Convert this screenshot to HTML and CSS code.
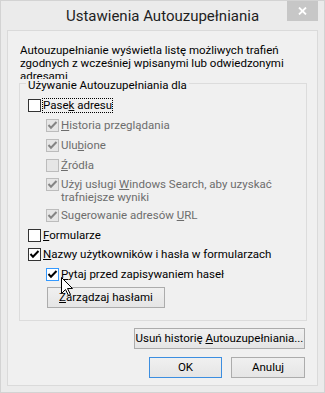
FILE: index.html
```html
<!DOCTYPE html>
<html lang="pl">
<head>
    <meta charset="UTF-8">
    <meta name="viewport" content="width=device-width, initial-scale=1.0">
    <title>Ustawienia Autouzupełniania</title>
    <link rel="stylesheet" href="styles.css">
</head>
<body>
    <div class="window">
        <div class="titlebar">
            <div class="title">Ustawienia Autouzupełniania</div>
            <div class="close">
                <svg width="9" height="8" viewBox="0 0 9 8"><path d="M1 0.5 L8 7.5 M8 0.5 L1 7.5" stroke="#fff" stroke-width="1.8" fill="none"/></svg>
            </div>
        </div>

        <div class="client">
            <p class="intro">Autouzupełnianie wyświetla listę możliwych trafień<br>zgodnych z wcześniej wpisanymi lub odwiedzonymi<br>adresami</p>

            <div class="group">
                <div class="group-label">Używanie Autouzupełniania dla</div>

                <div class="opt">
                    <span class="box"></span>
                    <span class="focus">Pase<u>k</u> adresu</span>
                </div>
                <div class="opt sub disabled">
                    <span class="box"><svg width="11" height="11" viewBox="0 0 11 11"><polyline points="1.5,5 4,7.8 9.5,2" /></svg></span>
                    <span><u>H</u>istoria przeglądania</span>
                </div>
                <div class="opt sub disabled">
                    <span class="box"><svg width="11" height="11" viewBox="0 0 11 11"><polyline points="1.5,5 4,7.8 9.5,2" /></svg></span>
                    <span>Ulu<u>b</u>ione</span>
                </div>
                <div class="opt sub disabled">
                    <span class="box"></span>
                    <span><u>Ź</u>ródła</span>
                </div>
                <div class="opt sub disabled search">
                    <span class="box"><svg width="11" height="11" viewBox="0 0 11 11"><polyline points="1.5,5 4,7.8 9.5,2" /></svg></span>
                    <span>Użyj usługi <u>W</u>indows Search, aby uzyskać<br>trafniejsze wyniki</span>
                </div>
                <div class="opt sub disabled after-search">
                    <span class="box"><svg width="11" height="11" viewBox="0 0 11 11"><polyline points="1.5,5 4,7.8 9.5,2" /></svg></span>
                    <span>Sugerowanie adresów <u>U</u>RL</span>
                </div>
                <div class="opt">
                    <span class="box"></span>
                    <span><u>F</u>ormularze</span>
                </div>
                <div class="opt tight">
                    <span class="box"><svg width="11" height="11" viewBox="0 0 11 11"><polyline points="1.5,5 4,7.8 9.5,2" /></svg></span>
                    <span><u>N</u>azwy użytkowników i hasła w formularzach</span>
                </div>
                <div class="opt sub hover">
                    <span class="box"><svg width="11" height="11" viewBox="0 0 11 11"><polyline points="1.5,5 4,7.8 9.5,2" /></svg></span>
                    <span><u>P</u>ytaj przed zapisywaniem haseł</span>
                </div>

                <button class="btn manage"><u>Z</u>arządzaj hasłami</button>
            </div>

            <div class="actions">
                <button class="btn wide">Usuń historię <u>A</u>utouzupełniania...</button>
                <div class="pair">
                    <button class="btn ok">OK</button>
                    <button class="btn cancel">Anuluj</button>
                </div>
            </div>
        </div>

        <svg class="cursor" width="12" height="19" viewBox="0 0 12 19">
            <polygon points="0.5,0.5 0.5,16.5 4.5,12.5 7.5,18.5 9.5,17.5 6.5,11.5 11.5,11.5" fill="#fff" stroke="#000" stroke-width="1"/>
        </svg>
    </div>
</body>
</html>
```

FILE: styles.css
```css
body {
    margin: 0;
    background: #ebebeb;
    font-family: Roboto, "Liberation Sans", sans-serif;
    font-size: 11.5px;
    color: #000;
}
.window {
    position: relative;
    width: 325px;
    height: 393px;
    box-sizing: border-box;
    border: 1px solid #d3d3d3;
    background: #ebebeb;
    overflow: hidden;
}
.titlebar {
    height: 29px;
    display: grid;
    grid-template-columns: 1fr auto 1fr;
    align-items: center;
}
.title {
    grid-column: 2;
    font-size: 15px;
    line-height: 18px;
    color: #1e1e1e;
}
.close {
    grid-column: 3;
    justify-self: end;
    align-self: start;
    width: 31px;
    height: 20px;
    margin-right: 6px;
    background: #c7c7c7;
    display: flex;
    align-items: center;
    justify-content: center;
}
.client {
    margin: 0 6px;
    height: 356px;
    box-sizing: border-box;
    border: 1px solid #dadada;
    background: #f0f0f0;
}
.intro {
    margin: 13px 0 0 12px;
    height: 35px;
    overflow: hidden;
    line-height: 13px;
}
.group {
    margin: 4px 10px 0 11px;
    border: 1px solid #dcdcdc;
    padding: 0 0 12px 8px;
}
.group-label {
    width: fit-content;
    margin: -5px 0 0 -2px;
    padding: 0 2px;
    background: #f0f0f0;
    line-height: 13px;
}
.opt {
    display: flex;
    align-items: flex-start;
    line-height: 13px;
    margin-top: 7px;
}
.opt.search {
    margin-top: 6px;
}
.opt.after-search {
    margin-top: 5px;
}
.opt.tight {
    margin-top: 6px;
}
.sub {
    margin-left: 18px;
}
.box {
    flex: none;
    width: 13px;
    height: 13px;
    box-sizing: border-box;
    border: 1px solid #333;
    background: #fff;
    margin-right: 2px;
    display: flex;
    align-items: center;
    justify-content: center;
}
.box svg polyline {
    fill: none;
    stroke: #000;
    stroke-width: 2;
}
.disabled {
    color: #6d6d6d;
}
.disabled .box {
    border-color: #bcbcbc;
    background: #e6e6e6;
}
.disabled .box svg polyline {
    stroke: #858585;
}
.hover .box {
    border-color: #3399ff;
}
.focus {
    outline: 1px dotted #000;
}
u {
    text-underline-offset: 1px;
}
.btn {
    font: inherit;
    color: #000;
    height: 21px;
    box-sizing: border-box;
    border: 1px solid #acacac;
    background: linear-gradient(#f0f0f0, #e5e5e5);
    padding: 0;
    line-height: 19px;
}
.manage {
    display: block;
    width: 118px;
    margin: 6px 0 0 19px;
}
.actions {
    display: flex;
    flex-direction: column;
    align-items: flex-end;
    margin-right: 12px;
}
.wide {
    width: 171px;
    margin-top: 7px;
}
.pair {
    display: flex;
    gap: 9px;
    margin-top: 8px;
}
.ok {
    width: 73px;
    border-color: #3c8ee0;
}
.cancel {
    width: 74px;
}
.cursor {
    position: absolute;
    left: 60px;
    top: 276px;
}
```
